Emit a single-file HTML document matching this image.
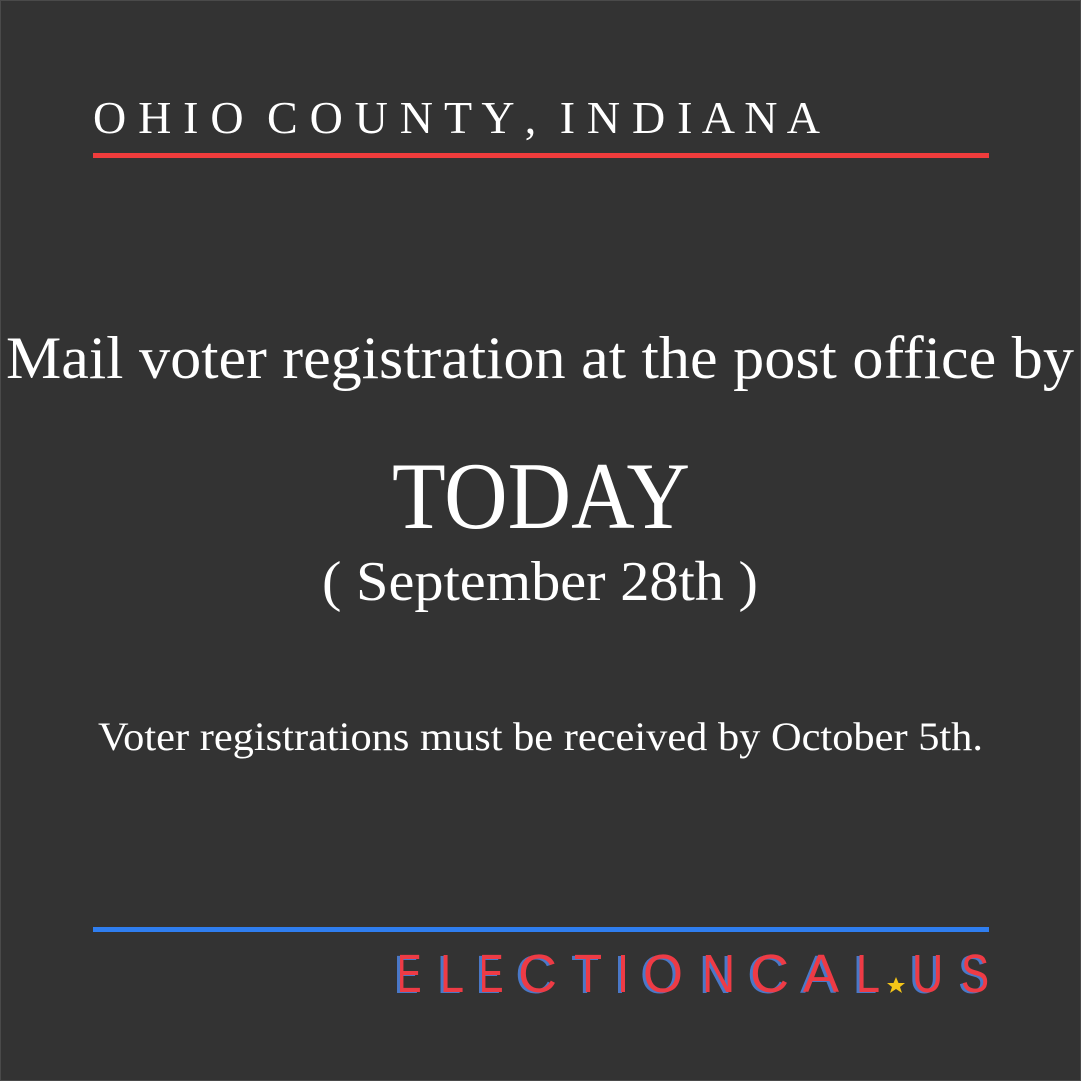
<!DOCTYPE html>
<html><head><meta charset="utf-8"><style>
html,body{margin:0;padding:0;background:#333333;}
svg{display:block}
</style></head><body>
<svg width="1081" height="1081" viewBox="0 0 1081 1081" xmlns="http://www.w3.org/2000/svg" xml:space="preserve">
<rect x="0" y="0" width="1081" height="1081" fill="#333333"/>
<rect x="0.5" y="0.5" width="1080" height="1080" fill="none" stroke="#4a4a4a" stroke-width="1"/>
<g font-family="Liberation Serif, serif" fill="#ffffff">
<text x="93" y="133" font-size="46" textLength="727" lengthAdjust="spacing" xml:space="preserve">O H I O  C O U N T Y ,  I N D I A N A</text>
<text x="6" y="378" font-size="60" textLength="1068" lengthAdjust="spacingAndGlyphs">Mail voter registration at the post office by</text>
<text x="392" y="528" font-size="95" textLength="298" lengthAdjust="spacingAndGlyphs">TODAY</text>
<text x="322" y="600" font-size="56" textLength="436" lengthAdjust="spacingAndGlyphs">( September 28th )</text>
<text x="98" y="750" font-size="40" textLength="885" lengthAdjust="spacingAndGlyphs">Voter registrations must be received by October 5th.</text>
</g>
<rect x="93" y="153" width="896" height="5" fill="#f03c3c"/>
<rect x="93" y="927" width="896" height="5" fill="#2f7ef0"/>
<g font-family="Liberation Sans, sans-serif" font-size="54">
<g fill="#4a78c8">
<text transform="translate(394,993) scale(0.68,1)">E</text>
<text transform="translate(437,993) scale(0.8,1)">L</text>
<text transform="translate(476,993) scale(0.68,1)">E</text>
<text transform="translate(515,993) scale(1,1)">C</text>
<text transform="translate(571,993) scale(0.85,1)">T</text>
<text transform="translate(614,993) scale(0.8,1)">I</text>
<text transform="translate(640,993) scale(0.95,1)">O</text>
<text transform="translate(699,993) scale(0.85,1)">N</text>
<text transform="translate(747,993) scale(1,1)">C</text>
<text transform="translate(800,993) scale(1,1)">A</text>
<text transform="translate(853,993) scale(0.8,1)">L</text>
<text transform="translate(909,993) scale(0.8,1)">U</text>
<text transform="translate(958,993) scale(0.78,1)">S</text>
</g>
<g fill="#ee3b45">
<text transform="translate(397,992) scale(0.68,1)">E</text>
<text transform="translate(440,992) scale(0.8,1)">L</text>
<text transform="translate(479,992) scale(0.68,1)">E</text>
<text transform="translate(518,992) scale(1,1)">C</text>
<text transform="translate(574,992) scale(0.85,1)">T</text>
<text transform="translate(617,992) scale(0.8,1)">I</text>
<text transform="translate(643,992) scale(0.95,1)">O</text>
<text transform="translate(702,992) scale(0.85,1)">N</text>
<text transform="translate(750,992) scale(1,1)">C</text>
<text transform="translate(803,992) scale(1,1)">A</text>
<text transform="translate(856,992) scale(0.8,1)">L</text>
<text transform="translate(912,992) scale(0.8,1)">U</text>
<text transform="translate(961,992) scale(0.78,1)">S</text>
</g>
</g>
<polygon points="896,977 898.5,983 905,983 900,987 902,993 896,989 890,993 892,987 887,983 893.5,983" fill="#f5c518"/>
</svg>
</body></html>
